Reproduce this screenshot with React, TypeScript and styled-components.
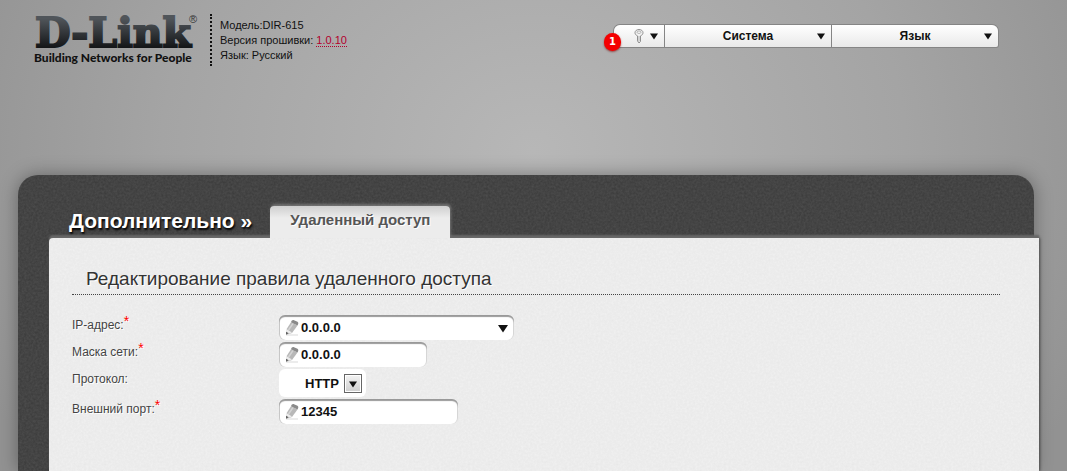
import React from "react";
import styled, { createGlobalStyle } from "styled-components";

const noise = (color: string, strength: string) =>
  `url("data:image/svg+xml,%3Csvg xmlns='http://www.w3.org/2000/svg' width='128' height='128'%3E%3Cfilter id='n'%3E%3CfeTurbulence type='fractalNoise' baseFrequency='0.45' numOctaves='2' stitchTiles='stitch'/%3E%3CfeColorMatrix values='0 0 0 0 ${color} 0 0 0 0 ${color} 0 0 0 0 ${color} ${strength} 0 0 0 0'/%3E%3C/filter%3E%3Crect width='128' height='128' filter='url(%23n)'/%3E%3C/svg%3E")`;

const GlobalStyle = createGlobalStyle`
  * { box-sizing: border-box; }
  html { height: 100%; }
  body {
    margin: 0;
    min-height: 100%;
    background: radial-gradient(ellipse 620px 520px at 50% 150px, #b7b7b7 0%, #a4a4a4 60%, #929292 100%);
    font-family: "Liberation Sans", Arial, sans-serif;
    color: #222;
  }
  button, input, select { font-family: inherit; }
`;

const Page = styled.div`
  min-height: 100vh;
  display: flex;
  flex-direction: column;
`;

const Header = styled.header`
  display: flex;
  align-items: flex-start;
  justify-content: space-between;
  height: 175px;
  padding: 14px 69px 0 32px;
`;

const Brand = styled.div`
  display: flex;
`;

const Logo = styled.svg`
  display: block;
  overflow: visible;
  width: 170px;
  height: 52px;
`;

const DeviceInfo = styled.div`
  margin-left: 8px;
  padding: 4px 0 0 8px;
  border-left: 2px dotted #111;
  height: 52px;
  font-size: 11px;
  line-height: 15px;
  color: #111;
`;

const Firmware = styled.a`
  color: #b3002d;
  text-decoration: none;
  border-bottom: 1px dotted #b3002d;
`;

const Menu = styled.nav`
  position: relative;
  display: flex;
  margin-top: 11px;
  height: 22px;
  border-radius: 6px 6px 2px 0;
  background: linear-gradient(#fff, #e9e9e9);
  box-shadow: 0 0 0 1px #858585;
`;

const MenuButton = styled.button<{ $width: number }>`
  display: flex;
  align-items: center;
  width: ${(p) => p.$width}px;
  padding: 0 6px 0 14px;
  border: 0;
  border-right: 1px solid #858585;
  background: none;
  font-size: 12px;
  font-weight: bold;
  color: #111;
  &:last-child { border-right: 0; }
`;

const MenuLabel = styled.span`
  flex: 1;
  display: flex;
  justify-content: center;
`;

const Arrow = styled.svg<{ $size: number }>`
  display: block;
  flex: none;
  width: ${(p) => p.$size}px;
  height: ${(p) => p.$size}px;
`;

const Badge = styled.span`
  position: absolute;
  left: -10px;
  top: 8px;
  z-index: 1;
  width: 17px;
  height: 18px;
  border-radius: 9px;
  background: #f40000;
  box-shadow: 0 1px 2px rgba(120, 0, 0, 0.6);
  color: #fff;
  font: bold 10px/18px "DejaVu Sans", sans-serif;
  text-align: center;
`;

const Shell = styled.div`
  flex: 1;
  display: flex;
  flex-direction: column;
  margin: 0 33px 0 18px;
  border-radius: 20px 20px 0 0;
  background: ${noise("0", "0.28")} #4f4f4f;
  box-shadow: 0 0 18px rgba(0, 0, 0, 0.35);
`;

const TabBar = styled.div`
  display: flex;
  align-items: flex-end;
  height: 63px;
  padding-left: 51px;
`;

const Section = styled.h1`
  margin: 0 18px 0 0;
  padding-bottom: 5px;
  font-size: 21px;
  line-height: 24px;
  color: #fff;
  text-shadow: 1px 2px 2px #000;
`;

const Tab = styled.a`
  position: relative;
  z-index: 1;
  display: block;
  height: 32px;
  padding: 0 20px;
  border-radius: 4px 4px 0 0;
  background: linear-gradient(#cfcfcf, #ececec 12px);
  box-shadow: 1px -2px 3px rgba(150, 150, 150, 0.6);
  font-size: 15px;
  font-weight: bold;
  line-height: 28px;
  text-decoration: none;
  color: #555;
  text-shadow: 1px 1px 0 #fff;
`;

const Content = styled.main`
  flex: 1;
  margin: 0 -5px 0 31px;
  padding: 29px 39px 24px 23px;
  border-radius: 4px 0 0 0;
  background: ${noise("0.5", "0.18")} #f1f1f1;
  box-shadow: 0 -3px 2px #686868, 1px 0 3px rgba(0, 0, 0, 0.5);
`;

const Title = styled.h2`
  margin: 0 0 20px;
  padding: 0 14px 3px;
  border-bottom: 1px dotted #444;
  font-size: 19px;
  font-weight: normal;
  line-height: 24px;
  color: #333;
  text-shadow: 1px 1px 0 #fff;
`;

const Form = styled.form`
  display: grid;
  grid-template-columns: 207px 1fr;
  row-gap: 2px;
`;

const Label = styled.label`
  padding-top: 2px;
  font-size: 12px;
  line-height: 16px;
  color: #444;
  text-shadow: 1px 1px 0 #fff;
`;

const Required = styled.sup`
  color: #f00;
  font-size: 14px;
  line-height: 1px;
  vertical-align: 3px;
`;

const Field = styled.div<{ $width: number }>`
  display: flex;
  align-items: center;
  width: ${(p) => p.$width}px;
  height: 25px;
  padding: 0 6px;
  border-radius: 6px;
  background: #fff;
  box-shadow: inset 0 2px 1px #999, inset -1px 0 0 #ddd, inset 1px 0 0 #ccc;
`;

const TextInput = styled.input`
  flex: 1;
  min-width: 0;
  padding: 0;
  border: 0;
  outline: 0;
  background: none;
  font-size: 13px;
  font-weight: bold;
  color: #111;
`;

const Toggle = styled.button`
  display: flex;
  padding: 0;
  border: 0;
  background: none;
`;

const SelectBox = styled.div`
  position: relative;
  display: flex;
  width: 87px;
  height: 28px;
  border-radius: 6px;
  background: #fff;
`;

const Select = styled.select`
  appearance: none;
  width: 100%;
  padding: 0 0 0 26px;
  border: 0;
  border-radius: 6px;
  background: none;
  font-size: 13px;
  font-weight: bold;
  color: #111;
`;

const SelectArrow = styled.span`
  position: absolute;
  right: 4px;
  top: 5px;
  display: flex;
  align-items: center;
  justify-content: center;
  width: 18px;
  height: 19px;
  border: 1px solid #666;
  box-shadow: inset 0 0 0 1px #fff;
  background: linear-gradient(#f3f3f3, #cfcfcf);
  pointer-events: none;
`;

const Pencil = styled.svg`
  flex: none;
  display: block;
  width: 16px;
  height: 17px;
`;

const Down = ({ size = 8 }: { size?: number }) => (
  <Arrow $size={size} viewBox="0 0 8 8" aria-hidden="true">
    <path d="M0 1.500h8L4 7.500z" fill="#111" />
  </Arrow>
);

const PencilIcon = () => (
  <Pencil viewBox="0 0 16 17" aria-hidden="true">
    <path d="M1 16h12" stroke="#e6e6e6" strokeWidth="1.500" />
    <path d="M6 3.200l6.500 3.200-5.500 7.500-5.500 1.800.3-6z" fill="#b8b8b8" />
    <path d="M8 4.500l-4.500 6.500" stroke="#d4d4d4" strokeWidth="1.500" />
    <path d="M1.700 10.200l5.300 3.400-5.500 1.800z" fill="#ececec" />
    <path d="M1 12.800l2.800 1.500-2.800 1.400z" fill="#606060" />
    <path d="M6 3.200C6.500 1.500 7.500.8 9 1.200L12.500 2.800c1.200.8 1 2 0 3.600z" fill="#8a8a8a" />
  </Pencil>
);

const LogoMark = () => (
  <Logo viewBox="0 0 170 52" role="img" aria-label="D-Link">
    <defs>
      <linearGradient id="ink" x1="0" y1="0" x2="0" y2="1">
        <stop offset="0.200" stopColor="#50555a" />
        <stop offset="0.800" stopColor="#141618" />
      </linearGradient>
    </defs>
    <text x="3" y="33" fontFamily="DejaVu Serif, serif" fontWeight="bold" fontSize="41" fill="url(#ink)" stroke="url(#ink)" strokeWidth="2">
      D-Link
    </text>
    <text x="157" y="9" fontFamily="Liberation Sans, sans-serif" fontSize="11" fill="#333">®</text>
    <text x="2" y="48" fontFamily="Lato, sans-serif" fontWeight="900" fontSize="12" fill="#111">
      Building Networks for People
    </text>
  </Logo>
);

const KeyIcon = () => (
  <svg width="10" height="16" viewBox="0 0 10 16" aria-hidden="true">
    <path d="M5 1.500C2.800 1.500 1 2.800 1 4.700c0 1.600 1.200 2.600 2.500 3.200v5L5 15l1.500-1.500V7.900C7.800 7.300 9 6.300 9 4.700c0-1.900-1.800-3.200-4-3.200z" fill="#f2f2f2" stroke="#8f8f8f" />
    <ellipse cx="5" cy="4.200" rx="2" ry="1.200" fill="#fff" stroke="#a0a0a0" strokeWidth="0.800" />
    <path d="M5 8v5.500" stroke="#b0b0b0" fill="none" />
  </svg>
);

interface FieldRowProps {
  id: string;
  label: string;
  value: string;
  width: number;
  combo?: boolean;
}

const FieldRow = ({ id, label, value, width, combo }: FieldRowProps) => (
  <>
    <Label htmlFor={id}>
      {label}
      <Required>*</Required>
    </Label>
    <Field $width={width}>
      <PencilIcon />
      <TextInput id={id} defaultValue={value} />
      {combo && (
        <Toggle type="button" aria-label="Выбрать адрес">
          <Down size={10} />
        </Toggle>
      )}
    </Field>
  </>
);

export default function App() {
  return (
    <Page>
      <GlobalStyle />
      <Header>
        <Brand>
          <LogoMark />
          <DeviceInfo>
            <div>Модель:DIR-615</div>
            <div>
              Версия прошивки: <Firmware href="#firmware">1.0.10</Firmware>
            </div>
            <div>Язык: Русский</div>
          </DeviceInfo>
        </Brand>
        <Menu>
          <Badge>1</Badge>
          <MenuButton $width={51} aria-label="Уведомления">
            <MenuLabel><KeyIcon /></MenuLabel>
            <Down />
          </MenuButton>
          <MenuButton $width={167}>
            <MenuLabel>Система</MenuLabel>
            <Down />
          </MenuButton>
          <MenuButton $width={166}>
            <MenuLabel>Язык</MenuLabel>
            <Down />
          </MenuButton>
        </Menu>
      </Header>
      <Shell>
        <TabBar>
          <Section>Дополнительно »</Section>
          <Tab href="#remote">Удаленный доступ</Tab>
        </TabBar>
        <Content>
          <Title>Редактирование правила удаленного доступа</Title>
          <Form>
            <FieldRow id="ip" label="IP-адрес:" value="0.0.0.0" width={235} combo />
            <FieldRow id="mask" label="Маска сети:" value="0.0.0.0" width={148} />
            <Label htmlFor="protocol">Протокол:</Label>
            <SelectBox>
              <Select id="protocol" defaultValue="HTTP">
                <option>HTTP</option>
              </Select>
              <SelectArrow><Down /></SelectArrow>
            </SelectBox>
            <FieldRow id="port" label="Внешний порт:" value="12345" width={179} />
          </Form>
        </Content>
      </Shell>
    </Page>
  );
}
